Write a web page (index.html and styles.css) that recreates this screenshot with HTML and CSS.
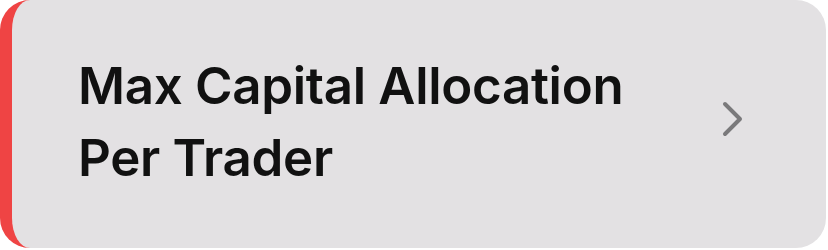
FILE: index.html
```html
<!DOCTYPE html>
<html lang="en">
<head>
  <meta charset="UTF-8">
  <meta name="viewport" content="width=device-width, initial-scale=1.0">
  <title>Settings</title>
  <link rel="stylesheet" href="styles.css">
</head>
<body>

  <div class="setting-card">
    <div class="setting-title">Max Capital Allocation<br>Per Trader</div>
    <svg class="chevron" width="22" height="36" viewBox="0 0 22 36">
      <path d="M3 3 L18 18 L3 33" fill="none" stroke="#7a797b" stroke-width="4" stroke-linecap="round" stroke-linejoin="round"/>
    </svg>
  </div>

</body>
</html>
```

FILE: styles.css
```css
body {
  margin: 0;
  background-color: #ffffff;
  font-family: Inter, "Noto Sans", sans-serif;
}

.setting-card {
  box-sizing: border-box;
  width: 826px;
  height: 248px;
  display: flex;
  align-items: center;
  justify-content: space-between;
  padding: 0 82px 5px 66px;
  background-color: #e3e1e3;
  border-left: 12px solid #ef4444;
  border-radius: 30px;
}

.setting-title {
  font-size: 51px;
  font-weight: 600;
  line-height: 72px;
  letter-spacing: -0.3px;
  color: #111111;
}

.chevron {
  display: block;
  margin-bottom: 5px;
}
```
